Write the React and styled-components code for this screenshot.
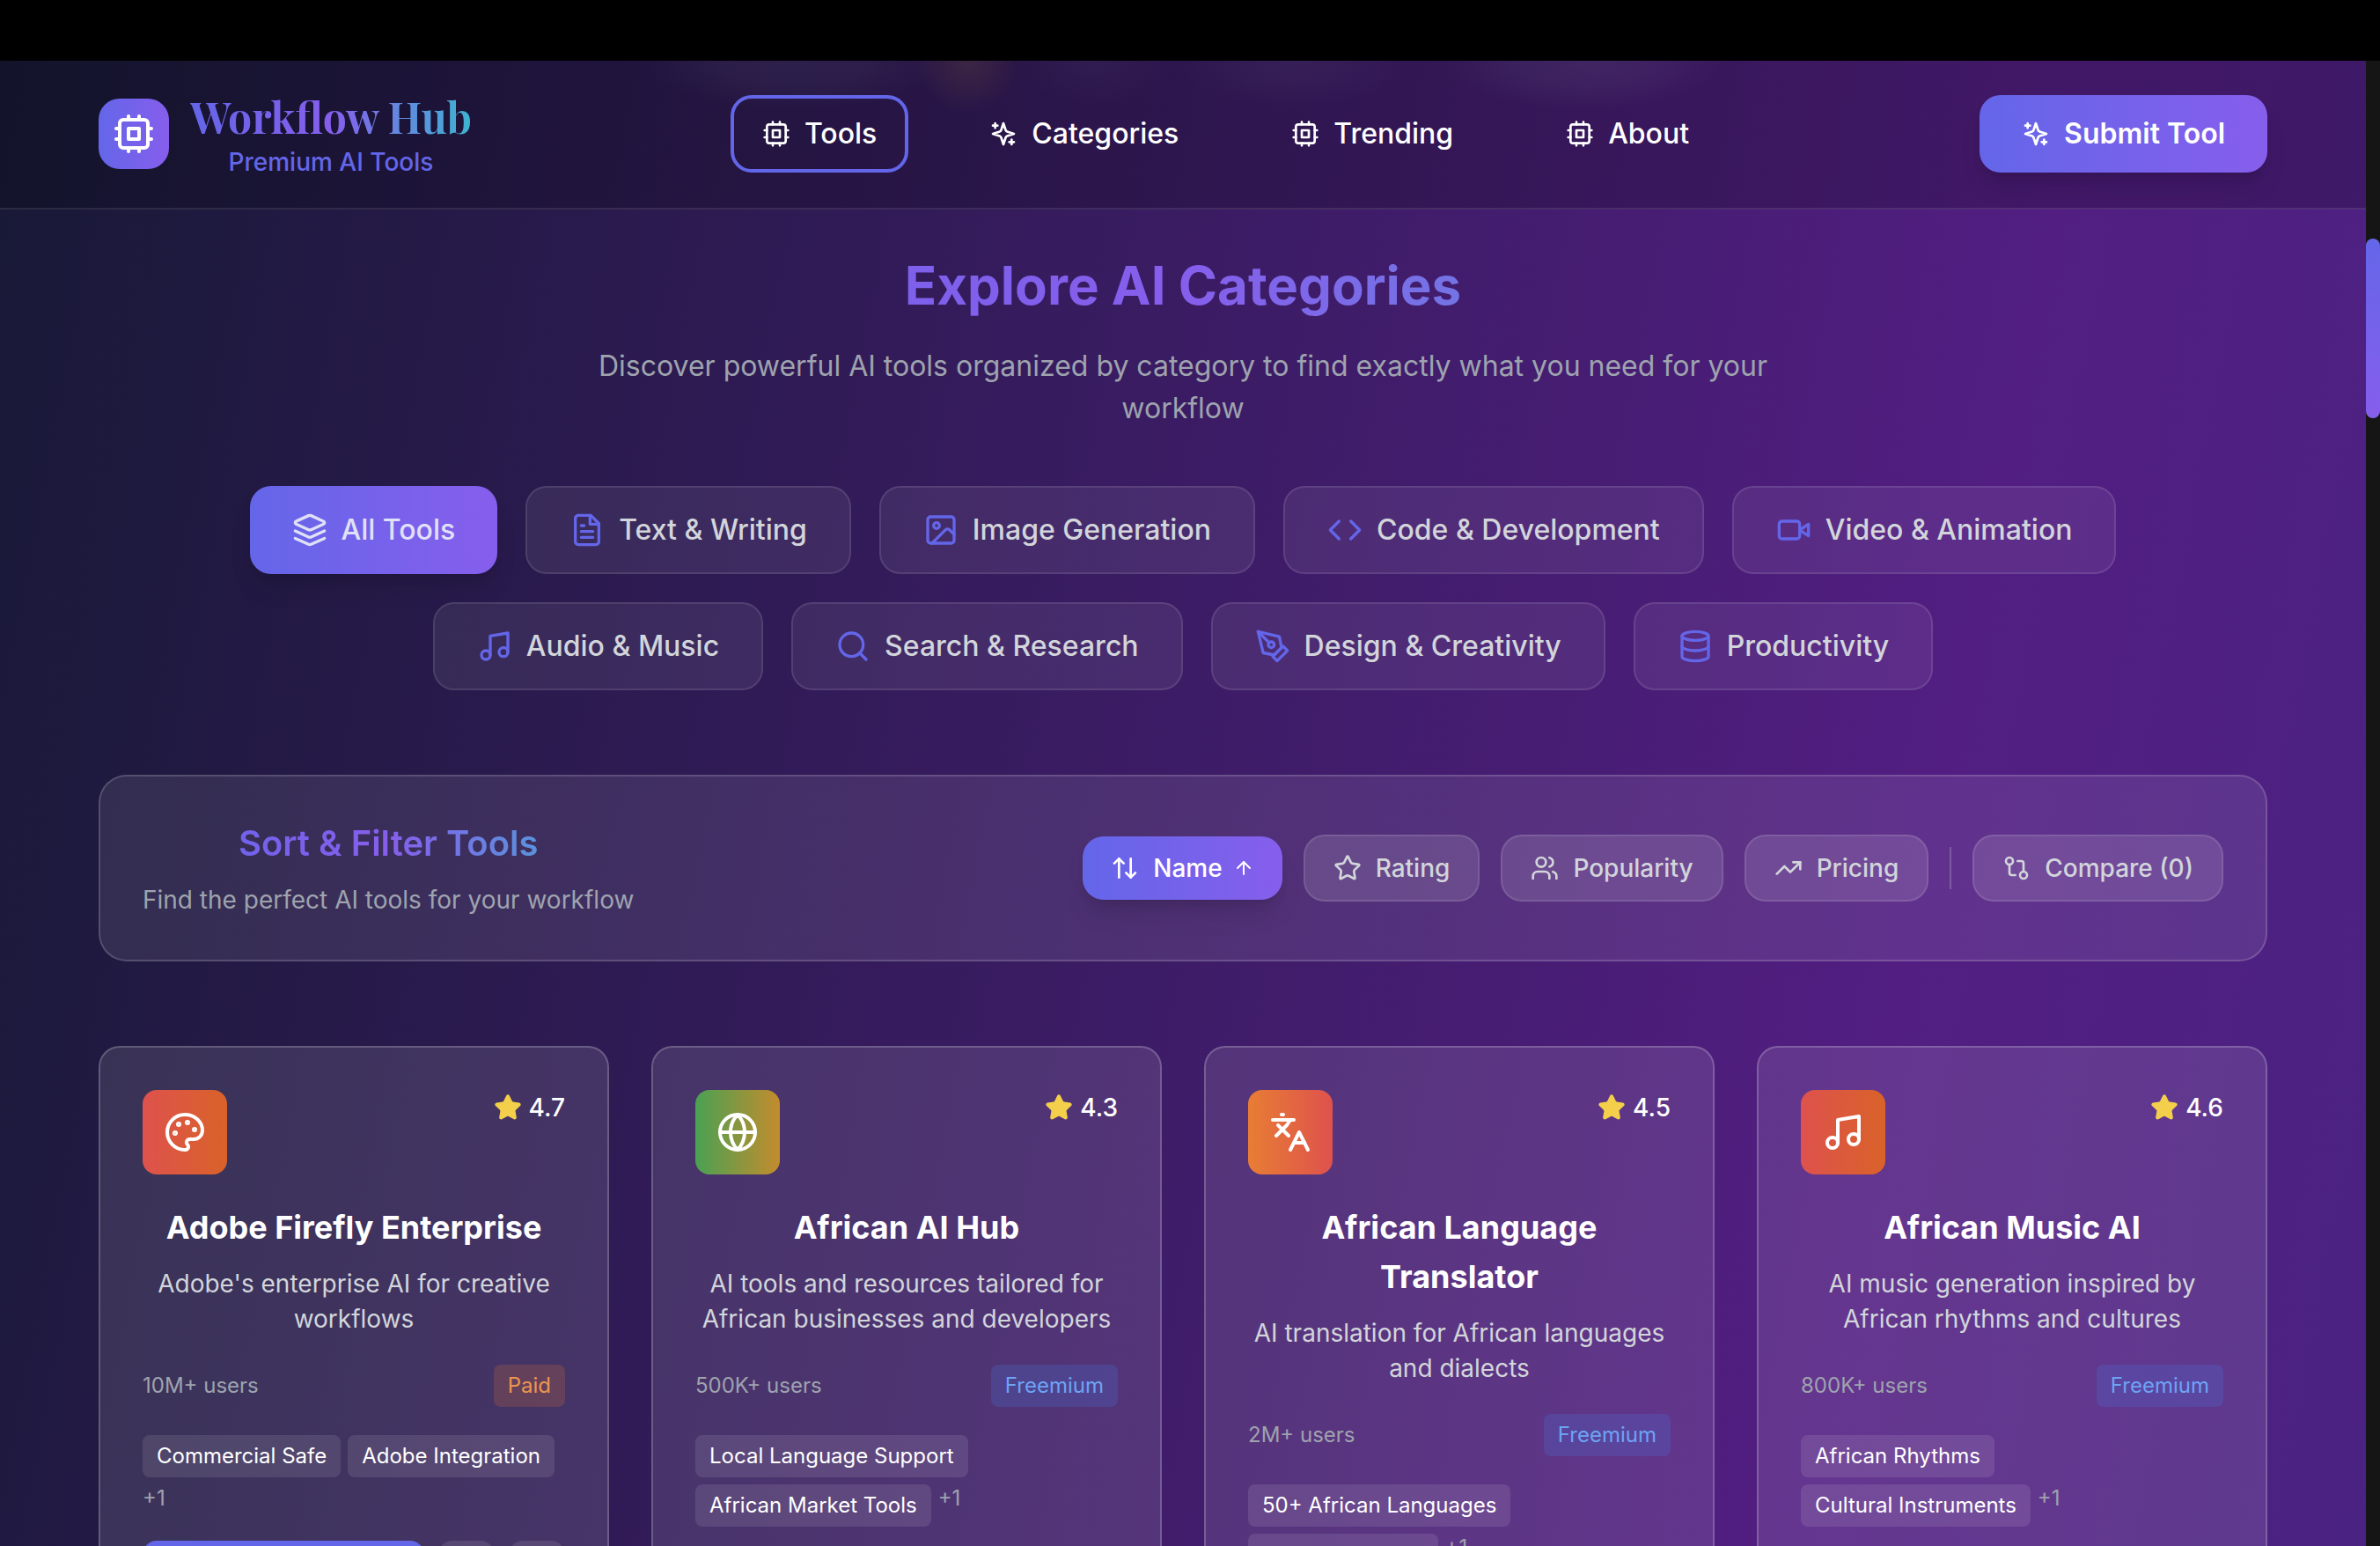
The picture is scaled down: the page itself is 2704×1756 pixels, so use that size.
import React from "react";
import styled, { createGlobalStyle, css } from "styled-components";
import {
  ArrowUp,
  ArrowUpDown,
  Code,
  Database,
  GitCompare,
  Globe,
  Image as ImageIcon,
  Languages,
  Music,
  Palette,
  Search,
  Star,
  TrendingUp,
  Users,
} from "lucide-react";

const colors = {
  indigo: "#6466e9",
  violet: "#865eec",
  cyan: "#3eb4d1",
  gray300: "#d2d5da",
  gray400: "#9ea3ae",
};

const GlobalStyle = createGlobalStyle`
  *, *::before, *::after { box-sizing: border-box; }
  body {
    margin: 0;
    background: #000;
    color: #fff;
    font-family: Inter, "Liberation Sans", sans-serif;
    font-size: 32px;
    line-height: 48px;
  }
  h1, h2, h3, p, ul { margin: 0; padding: 0; }
  button { font: inherit; color: inherit; cursor: pointer; }
  svg { flex: none; display: block; }
`;

const brandFill = css`
  background: linear-gradient(90deg, ${colors.indigo}, ${colors.violet});
`;

const brandText = css`
  background: linear-gradient(90deg, ${colors.indigo} 0%, ${colors.violet} 50%, ${colors.cyan} 100%);
  -webkit-background-clip: text;
  background-clip: text;
  color: transparent;
`;

const lift = css`
  box-shadow: 0 20px 30px -6px rgba(0, 0, 0, 0.1), 0 8px 12px -4px rgba(0, 0, 0, 0.1);
`;

const Screen = styled.div`
  height: 100vh;
  overflow: hidden;
  display: flex;
  flex-direction: column;
`;

const TopStrip = styled.div`
  flex: none;
  height: 69px;
  background: #000;
`;

const Viewport = styled.div`
  flex: 1;
  min-height: 0;
  display: flex;
`;

const Page = styled.div`
  flex: 1;
  min-width: 0;
  overflow: hidden;
  background-image: linear-gradient(to bottom right, #10182c, #521e82 50%, #302f7e);
  background-size: 100% 13950px;
  background-position: 0 -1670px;
`;

const ScrollTrack = styled.div`
  flex: none;
  width: 16px;
  padding-top: 202px;
  background: #151515;
`;

const ScrollThumb = styled.div`
  height: 204px;
  border-radius: 8px;
  background: linear-gradient(180deg, ${colors.indigo}, ${colors.violet});
`;

const Header = styled.header`
  display: flex;
  align-items: center;
  justify-content: space-between;
  padding: 31px 112px 32px;
  border-bottom: 2px solid rgba(255, 255, 255, 0.1);
  background:
    radial-gradient(170px 56px at 900px 0, rgba(150, 160, 180, 0.08), rgba(150, 160, 180, 0.06) 50%, transparent) no-repeat,
    radial-gradient(60px 60px at 1100px 0, rgba(190, 140, 40, 0.14), transparent) no-repeat,
    radial-gradient(90px 50px at 1240px 0, rgba(150, 160, 180, 0.05), transparent) no-repeat,
    radial-gradient(130px 54px at 1470px 0, rgba(150, 160, 180, 0.06), rgba(150, 160, 180, 0.04) 50%, transparent) no-repeat,
    radial-gradient(160px 56px at 1800px 0, rgba(150, 160, 180, 0.1), rgba(150, 160, 180, 0.07) 50%, transparent) no-repeat,
    rgba(0, 0, 0, 0.2);
`;

const Brand = styled.a`
  display: flex;
  align-items: center;
  gap: 24px;
  text-decoration: none;
`;

const BrandMark = styled.span`
  ${brandFill}
  display: grid;
  place-items: center;
  width: 80px;
  height: 80px;
  border-radius: 24px;
  color: #fff;
`;

const BrandWords = styled.span`
  display: flex;
  flex-direction: column;
  align-items: center;
`;

const BrandName = styled.span`
  ${brandText}
  font-family: "Playfair Display", "Liberation Serif", serif;
  font-size: 48px;
  font-weight: 700;
  line-height: 64px;
`;

const BrandTagline = styled.span`
  font-size: 28px;
  font-weight: 500;
  line-height: 40px;
  color: ${colors.indigo};
`;

const Nav = styled.nav`
  display: flex;
  gap: 56px;
`;

const NavLink = styled.a`
  display: flex;
  align-items: center;
  gap: 16px;
  padding: 16px 32px;
  border: 4px solid ${(p) => (p.$current ? colors.indigo : "transparent")};
  border-radius: 24px;
  font-weight: 500;
  color: #fff;
  text-decoration: none;
`;

const SubmitButton = styled.button`
  ${brandFill}
  ${lift}
  display: flex;
  align-items: center;
  gap: 16px;
  padding: 20px 48px;
  border: 0;
  border-radius: 24px;
  font-weight: 600;
`;

const Main = styled.main`
  padding: 50px 112px 0;
`;

const Intro = styled.section`
  text-align: center;
`;

const IntroTitle = styled.h1`
  ${brandText}
  font-size: 60px;
  font-weight: 700;
  line-height: 72px;
`;

const IntroText = styled.p`
  max-width: 1344px;
  margin: 32px auto 0;
  color: ${colors.gray400};
`;

const CategoryList = styled.div`
  display: flex;
  flex-wrap: wrap;
  justify-content: center;
  gap: 32px;
  margin-top: 64px;
`;

const CategoryButton = styled.button`
  display: flex;
  align-items: center;
  gap: 16px;
  padding: 24px 48px;
  border-radius: 24px;
  font-weight: 500;
  ${(p) =>
    p.$active
      ? css`
          ${brandFill}
          ${lift}
          border: 0;
          color: #e0e0f7;
        `
      : css`
          border: 2px solid rgba(255, 255, 255, 0.1);
          background: rgba(255, 255, 255, 0.07);
          color: ${colors.gray300};
          svg { color: ${colors.indigo}; }
        `}
`;

const SortPanel = styled.section`
  display: flex;
  align-items: center;
  justify-content: space-between;
  margin-top: 96px;
  padding: 48px;
  border: 2px solid rgba(255, 255, 255, 0.16);
  border-radius: 32px;
  background: rgba(255, 255, 255, 0.09);
`;

const SortTitle = styled.h2`
  ${brandText}
  font-size: 40px;
  font-weight: 600;
  line-height: 56px;
  text-align: center;
`;

const SortText = styled.p`
  margin-top: 16px;
  font-size: 28px;
  line-height: 40px;
  color: ${colors.gray400};
`;

const SortControls = styled.div`
  display: flex;
  align-items: center;
  gap: 24px;
`;

const SortButton = styled.button`
  display: flex;
  align-items: center;
  gap: 16px;
  padding: 16px 32px;
  border-radius: 24px;
  font-size: 28px;
  font-weight: 500;
  line-height: 40px;
  ${(p) =>
    p.$active
      ? css`
          ${brandFill}
          ${lift}
          border: 0;
          color: #fff;
        `
      : css`
          border: 2px solid rgba(255, 255, 255, 0.11);
          background: rgba(255, 255, 255, 0.12);
          color: ${colors.gray300};
        `}
`;

const SortLabel = styled.span`
  display: flex;
  align-items: center;
  gap: 12px;
`;

const Divider = styled.span`
  width: 2px;
  height: 48px;
  background: rgba(255, 255, 255, 0.2);
`;

const CardGrid = styled.section`
  display: grid;
  grid-template-columns: repeat(4, minmax(0, 1fr));
  gap: 48px;
  margin-top: 96px;
`;

const Card = styled.article`
  padding: 48px;
  border: 2px solid rgba(255, 255, 255, 0.2);
  border-radius: 24px;
  background: rgba(255, 255, 255, 0.11);
`;

const CardTop = styled.div`
  display: flex;
  align-items: flex-start;
  justify-content: space-between;
`;

const CardIcon = styled.span`
  display: grid;
  place-items: center;
  width: 96px;
  height: 96px;
  border-radius: 16px;
  background: linear-gradient(90deg, ${(p) => p.$from}, ${(p) => p.$to});
`;

const Rating = styled.span`
  display: flex;
  align-items: center;
  gap: 8px;
  font-size: 28px;
  font-weight: 500;
  line-height: 40px;
  svg { color: #f3cf4b; fill: #f3cf4b; }
`;

const CardTitle = styled.h3`
  margin-top: 32px;
  font-size: 36px;
  font-weight: 700;
  line-height: 56px;
  text-align: center;
`;

const CardText = styled.p`
  margin-top: 16px;
  font-size: 28px;
  line-height: 40px;
  text-align: center;
  color: ${colors.gray300};
`;

const CardMeta = styled.div`
  display: flex;
  align-items: center;
  justify-content: space-between;
  margin-top: 32px;
  font-size: 24px;
  line-height: 32px;
  color: ${colors.gray400};
`;

const PriceBadge = styled.span`
  padding: 8px 16px;
  border-radius: 8px;
  ${(p) =>
    p.$paid
      ? css`
          background: rgba(232, 120, 50, 0.2);
          color: #ec9550;
        `
      : css`
          background: rgba(70, 130, 240, 0.2);
          color: #6da3f3;
        `}
`;

const TagList = styled.div`
  display: flex;
  flex-wrap: wrap;
  gap: 8px;
  margin-top: 32px;
  font-size: 24px;
  line-height: 32px;
`;

const Tag = styled.span`
  padding: 8px 16px;
  border-radius: 8px;
  background: rgba(255, 255, 255, 0.1);
`;

const MoreTags = styled.span`
  color: ${colors.gray400};
`;

const CardActions = styled.div`
  display: flex;
  gap: 16px;
  margin-top: 32px;
`;

const VisitButton = styled.button`
  flex: 1;
  height: 64px;
  border: 0;
  border-radius: 16px;
  background: ${colors.indigo};
  font-size: 28px;
  font-weight: 500;
  line-height: 40px;
`;

const IconButton = styled.button`
  display: grid;
  place-items: center;
  width: 64px;
  height: 64px;
  padding: 0;
  border: 0;
  border-radius: 16px;
  background: rgba(255, 255, 255, 0.1);
`;

function Glyph({ size = 24, children }) {
  return (
    <svg
      width={size}
      height={size}
      viewBox="0 0 24 24"
      fill="none"
      stroke="currentColor"
      strokeWidth="2"
      strokeLinecap="round"
      strokeLinejoin="round"
      aria-hidden="true"
    >
      {children}
    </svg>
  );
}

const Chip = (p) => (
  <Glyph {...p}>
    <rect x="4" y="4" width="16" height="16" rx="2" />
    <rect x="9" y="9" width="6" height="6" />
    <path d="M15 2v2M15 20v2M2 15h2M2 9h2M20 15h2M20 9h2M9 2v2M9 20v2" />
  </Glyph>
);

const Sparkle = (p) => (
  <Glyph {...p}>
    <path d="m12 3-1.912 5.813a2 2 0 0 1-1.275 1.275L3 12l5.813 1.912a2 2 0 0 1 1.275 1.275L12 21l1.912-5.813a2 2 0 0 1 1.275-1.275L21 12l-5.813-1.912a2 2 0 0 1-1.275-1.275L12 3Z" />
    <path d="M5 3v4M19 17v4M3 5h4M17 19h4" />
  </Glyph>
);

const Stack = (p) => (
  <Glyph {...p}>
    <path d="m12.83 2.18a2 2 0 0 0-1.66 0L2.6 6.08a1 1 0 0 0 0 1.83l8.58 3.91a2 2 0 0 0 1.66 0l8.58-3.9a1 1 0 0 0 0-1.83Z" />
    <path d="m22 17.65-9.17 4.16a2 2 0 0 1-1.66 0L2 17.65" />
    <path d="m22 12.65-9.17 4.16a2 2 0 0 1-1.66 0L2 12.65" />
  </Glyph>
);

const Document = (p) => (
  <Glyph {...p}>
    <path d="M14.5 2H6a2 2 0 0 0-2 2v16a2 2 0 0 0 2 2h12a2 2 0 0 0 2-2V7.5L14.5 2z" />
    <path d="M14 2v6h6M16 13H8M16 17H8M10 9H8" />
  </Glyph>
);

const Camera = (p) => (
  <Glyph {...p}>
    <path d="m22 8-6 4 6 4V8Z" />
    <rect x="2" y="6" width="14" height="12" rx="2" />
  </Glyph>
);

const Pen = (p) => (
  <Glyph {...p}>
    <path d="m12 19 7-7 3 3-7 7-3-3z" />
    <path d="m18 13-1.5-7.5L2 2l3.5 14.5L13 18l5-5z" />
    <path d="m2 2 7.586 7.586" />
    <circle cx="11" cy="11" r="2" />
  </Glyph>
);

const navItems = [
  { label: "Tools", icon: Chip, current: true },
  { label: "Categories", icon: Sparkle },
  { label: "Trending", icon: Chip },
  { label: "About", icon: Chip },
];

const categories = [
  { label: "All Tools", icon: Stack, active: true },
  { label: "Text & Writing", icon: Document },
  { label: "Image Generation", icon: ImageIcon },
  { label: "Code & Development", icon: Code },
  { label: "Video & Animation", icon: Camera },
  { label: "Audio & Music", icon: Music },
  { label: "Search & Research", icon: Search },
  { label: "Design & Creativity", icon: Pen },
  { label: "Productivity", icon: Database },
];

const sorts = [
  { label: "Name", icon: ArrowUpDown, active: true },
  { label: "Rating", icon: Star },
  { label: "Popularity", icon: Users },
  { label: "Pricing", icon: TrendingUp },
];

const red = "#de524d";
const tools = [
  {
    name: "Adobe Firefly Enterprise",
    text: "Adobe's enterprise AI for creative workflows",
    rating: "4.7",
    users: "10M+ users",
    price: "Paid",
    tags: ["Commercial Safe", "Adobe Integration"],
    icon: Palette,
    from: red,
    to: "#d96229",
  },
  {
    name: "African AI Hub",
    text: "AI tools and resources tailored for African businesses and developers",
    rating: "4.3",
    users: "500K+ users",
    price: "Freemium",
    tags: ["Local Language Support", "African Market Tools"],
    icon: Globe,
    from: "#4aa153",
    to: "#c38c2d",
  },
  {
    name: "African Language Translator",
    text: "AI translation for African languages and dialects",
    rating: "4.5",
    users: "2M+ users",
    price: "Freemium",
    tags: ["50+ African Languages", "Cultural Context"],
    icon: Languages,
    from: "#e87d34",
    to: red,
  },
  {
    name: "African Music AI",
    text: "AI music generation inspired by African rhythms and cultures",
    rating: "4.6",
    users: "800K+ users",
    price: "Freemium",
    tags: ["African Rhythms", "Cultural Instruments"],
    icon: Music,
    from: red,
    to: "#d96229",
  },
];

function ToolCard({ tool }) {
  const Icon = tool.icon;
  return (
    <Card>
      <CardTop>
        <CardIcon $from={tool.from} $to={tool.to}>
          <Icon size={48} />
        </CardIcon>
        <Rating>
          <Star size={32} />
          {tool.rating}
        </Rating>
      </CardTop>
      <CardTitle>{tool.name}</CardTitle>
      <CardText>{tool.text}</CardText>
      <CardMeta>
        <span>{tool.users}</span>
        <PriceBadge $paid={tool.price === "Paid"}>{tool.price}</PriceBadge>
      </CardMeta>
      <TagList>
        {tool.tags.map((tag) => (
          <Tag key={tag}>{tag}</Tag>
        ))}
        <MoreTags>+1</MoreTags>
      </TagList>
      <CardActions>
        <VisitButton aria-label={`Open ${tool.name}`} />
        <IconButton aria-label={`Save ${tool.name}`} />
        <IconButton aria-label={`Compare ${tool.name}`} />
      </CardActions>
    </Card>
  );
}

export default function App() {
  return (
    <Screen>
      <GlobalStyle />
      <TopStrip />
      <Viewport>
        <Page>
          <Header>
            <Brand href="#">
              <BrandMark>
                <Chip size={48} />
              </BrandMark>
              <BrandWords>
                <BrandName>Workflow Hub</BrandName>
                <BrandTagline>Premium AI Tools</BrandTagline>
              </BrandWords>
            </Brand>
            <Nav>
              {navItems.map(({ label, icon: Icon, current }) => (
                <NavLink key={label} href={`#${label.toLowerCase()}`} $current={current}>
                  <Icon size={32} />
                  {label}
                </NavLink>
              ))}
            </Nav>
            <SubmitButton>
              <Sparkle size={32} />
              Submit Tool
            </SubmitButton>
          </Header>
          <Main>
            <Intro>
              <IntroTitle>Explore AI Categories</IntroTitle>
              <IntroText>
                Discover powerful AI tools organized by category to find exactly what you need for your workflow
              </IntroText>
            </Intro>
            <CategoryList>
              {categories.map(({ label, icon: Icon, active }) => (
                <CategoryButton key={label} $active={active}>
                  <Icon size={40} />
                  {label}
                </CategoryButton>
              ))}
            </CategoryList>
            <SortPanel>
              <div>
                <SortTitle>Sort &amp; Filter Tools</SortTitle>
                <SortText>Find the perfect AI tools for your workflow</SortText>
              </div>
              <SortControls>
                {sorts.map(({ label, icon: Icon, active }) => (
                  <SortButton key={label} $active={active}>
                    <Icon size={32} />
                    <SortLabel>
                      {label}
                      {active && <ArrowUp size={24} />}
                    </SortLabel>
                  </SortButton>
                ))}
                <Divider />
                <SortButton>
                  <GitCompare size={32} />
                  Compare (0)
                </SortButton>
              </SortControls>
            </SortPanel>
            <CardGrid>
              {tools.map((tool) => (
                <ToolCard key={tool.name} tool={tool} />
              ))}
            </CardGrid>
          </Main>
        </Page>
        <ScrollTrack>
          <ScrollThumb />
        </ScrollTrack>
      </Viewport>
    </Screen>
  );
}
